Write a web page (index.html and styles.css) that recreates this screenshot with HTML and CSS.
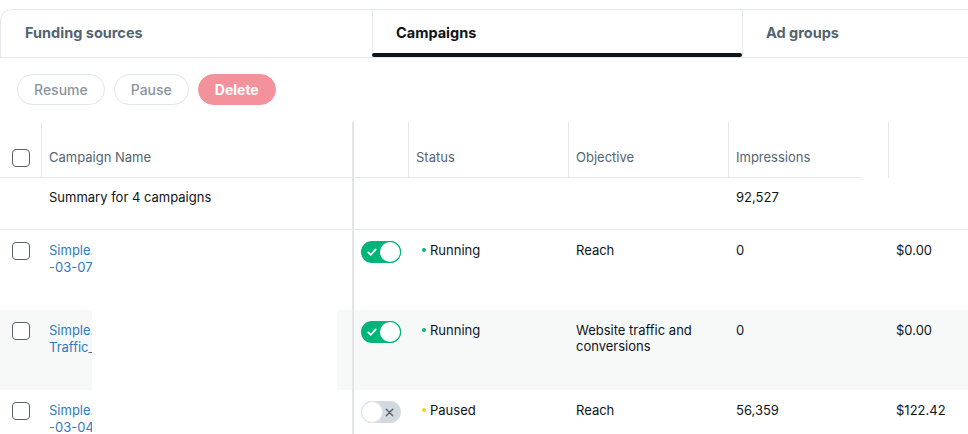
FILE: index.html
```html
<!DOCTYPE html>
<html>
<head>
<meta charset="utf-8">
<link rel="stylesheet" href="styles.css">
</head>
<body>
<div class="tabs">
  <div class="tab tab-first">Funding sources</div>
  <div class="tab tab-active">Campaigns</div>
  <div class="tab">Ad groups</div>
</div>

<div class="actions">
  <button class="btn">Resume</button>
  <button class="btn">Pause</button>
  <button class="btn btn-danger">Delete</button>
</div>

<div class="table">
  <div class="row head">
    <div class="cell cb-cell"><span class="checkbox"></span></div>
    <div class="cell name-head">Campaign Name</div>
    <div class="cell tg-cell"></div>
    <div class="cell">Status</div>
    <div class="cell">Objective</div>
    <div class="cell imp-head">Impressions</div>
    <div class="cell last-head"></div>
  </div>

  <div class="row summary">
    <div class="cell"></div>
    <div class="cell">Summary for 4 campaigns</div>
    <div class="cell tg-cell"></div>
    <div class="cell"></div>
    <div class="cell"></div>
    <div class="cell">92,527</div>
    <div class="cell"></div>
  </div>

  <div class="row item">
    <div class="cell cb-cell"><span class="checkbox"></span></div>
    <div class="cell name-cell">
      <div class="name-link"><span>Simple.</span><span>-03-07</span></div>
      <div class="redact"></div>
    </div>
    <div class="cell tg-cell"><span class="toggle on"><svg class="tick" viewBox="0 0 12 12" width="12" height="12"><path d="M2.3 6.4l2.5 2.4 4.9-5.4" fill="none" stroke="#fff" stroke-width="1.7" stroke-linecap="round" stroke-linejoin="round"/></svg><span class="knob"></span></span></div>
    <div class="cell"><span class="dot green"></span>Running</div>
    <div class="cell">Reach</div>
    <div class="cell">0</div>
    <div class="cell">$0.00</div>
  </div>

  <div class="row item alt">
    <div class="cell cb-cell"><span class="checkbox"></span></div>
    <div class="cell name-cell">
      <div class="name-link"><span>Simple.</span><span>Traffic_</span></div>
      <div class="redact"></div>
    </div>
    <div class="cell tg-cell"><span class="toggle on"><svg class="tick" viewBox="0 0 12 12" width="12" height="12"><path d="M2.3 6.4l2.5 2.4 4.9-5.4" fill="none" stroke="#fff" stroke-width="1.7" stroke-linecap="round" stroke-linejoin="round"/></svg><span class="knob"></span></span></div>
    <div class="cell"><span class="dot green"></span>Running</div>
    <div class="cell">Website traffic and conversions</div>
    <div class="cell">0</div>
    <div class="cell">$0.00</div>
  </div>

  <div class="row item">
    <div class="cell cb-cell"><span class="checkbox"></span></div>
    <div class="cell name-cell">
      <div class="name-link"><span>Simple.</span><span>-03-04</span></div>
      <div class="redact"></div>
    </div>
    <div class="cell tg-cell"><span class="toggle off"><span class="knob"></span><svg class="cross" viewBox="0 0 12 12" width="11" height="11"><path d="M2.5 2.5l7 7M9.5 2.5l-7 7" fill="none" stroke="#536471" stroke-width="1.5" stroke-linecap="round"/></svg></span></div>
    <div class="cell"><span class="dot yellow"></span>Paused</div>
    <div class="cell">Reach</div>
    <div class="cell">56,359</div>
    <div class="cell">$122.42</div>
  </div>
</div>
</body>
</html>
```

FILE: styles.css
```css
* { box-sizing: border-box; }
html, body { margin: 0; padding: 0; background: #fff; }
body {
  font-family: Inter, "Noto Sans", "Liberation Sans", sans-serif;
  color: #0f1419;
  font-size: 13px;
  width: 968px;
  height: 434px;
  overflow: hidden;
}

.tabs {
  margin-top: 9px;
  display: grid;
  grid-template-columns: 371px 370px 1fr;
  height: 49px;
  border-top: 1px solid #e6e9eb;
  border-left: 1px solid #e6e9eb;
  border-bottom: 1px solid #e6e9eb;
  border-top-left-radius: 12px;
}
.tab {
  position: relative;
  display: flex;
  align-items: center;
  padding-left: 24px;
  padding-bottom: 2px;
  font-weight: 700;
  font-size: 14.5px;
  color: #536471;
}
.tab + .tab { border-left: 1px solid #e6e9eb; padding-left: 23px; }
.tab-active { color: #0f1419; }
.tab-active::after {
  content: "";
  position: absolute;
  left: -1px;
  right: 0;
  bottom: 0;
  height: 4px;
  border-radius: 2px;
  background: #0f1419;
}

.actions {
  display: flex;
  gap: 9px;
  padding: 16px 0 0 17px;
  height: 64px;
}
.btn {
  font-family: inherit;
  height: 31px;
  padding: 0 16px;
  border-radius: 16px;
  border: 1px solid #e1e6ea;
  background: #fff;
  color: #8b959e;
  font-size: 14px;
  font-weight: 500;
}
.btn-danger {
  background: #f4929b;
  border-color: #f4929b;
  color: #fff;
  font-weight: 700;
}

.row {
  display: grid;
  grid-template-columns: 41px 311px 56px 160px 160px 160px 1fr;
}
.cell {
  padding: 12px 8px 0;
  line-height: 16px;
}
.head .cell {
  height: 56px;
  padding: 27px 7px 0;
  color: #536471;
  border-left: 1px solid #e6e9eb;
}
.head .cb-cell { border-left: none; padding: 27px 0 0 12px; }
.head .tg-cell { border-left: 2px solid #e3e5e7; }
.head { position: relative; }
.head::after {
  content: "";
  position: absolute;
  left: 0;
  bottom: 0;
  width: 862px;
  height: 1px;
  background: #e6e9eb;
}
.head .last-head { border-left: 1px solid #e6e9eb; }

.summary { height: 52px; border-bottom: 1px solid #e6e9eb; }
.summary .cell { padding-top: 11px; }

.tg-cell { border-left: 2px solid #e3e5e7; }
.item { height: 80px; }
.item .tg-cell { padding: 11px 0 0 7px; }
.alt { background: #f7f9f9; }

.cb-cell { padding: 12px 0 0 12px; }
.checkbox {
  display: block;
  width: 18px;
  height: 18px;
  border: 1.5px solid #57626c;
  border-radius: 4px;
  background: #fff;
}

.name-cell {
  display: flex;
  padding: 0 0 0 8px;
}
.name-link {
  width: 43px;
  padding-top: 12px;
  display: flex;
  flex-direction: column;
  color: #2f7ac2;
  line-height: 17px;
}
.name-link span {
  white-space: nowrap;
}
.redact {
  width: 245px;
  background: #fff;
  position: relative;
}

.toggle {
  position: relative;
  display: flex;
  align-items: center;
  width: 40px;
  height: 22px;
  border-radius: 11px;
}
.toggle.on { background: #00b57a; }
.toggle.off { background: #d2dae0; justify-content: space-between; }
.toggle .knob {
  width: 20px;
  height: 20px;
  border-radius: 50%;
  background: #fff;
}
.toggle.on .knob { margin-left: auto; margin-right: 1px; box-shadow: 0 0 0 1px #00b57a; }
.toggle.off .knob { margin-left: 1px; box-shadow: 0 0 0 1px #dfe5e9; }
.toggle .tick { margin-left: 5px; }
.toggle .cross { margin-right: 6px; }

.dot {
  display: inline-block;
  width: 4px;
  height: 4px;
  border-radius: 50%;
  margin: 0 4px 2px 6px;
  vertical-align: middle;
}
.dot.green { background: #00b57a; }
.dot.yellow { background: #ffd400; }
```
